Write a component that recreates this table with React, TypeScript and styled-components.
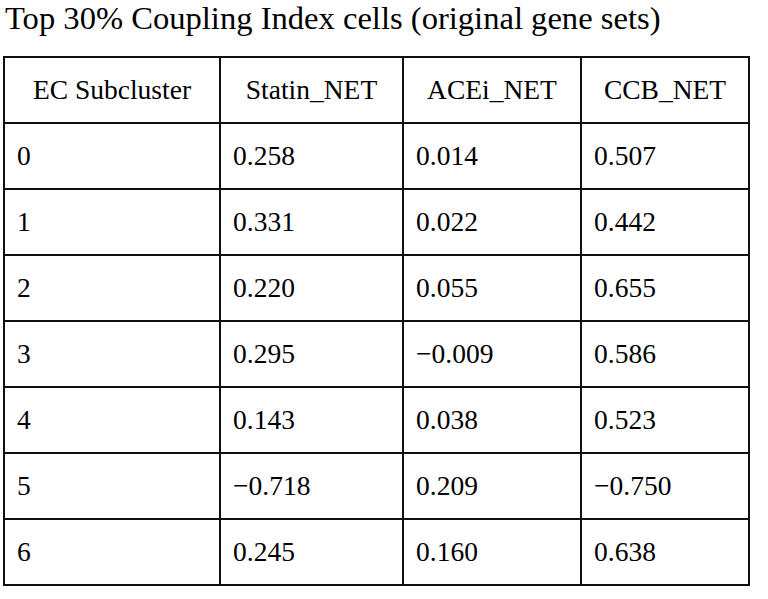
import React from "react";
import styled, { createGlobalStyle } from "styled-components";

const Global = createGlobalStyle`
  html, body {
    margin: 0;
    padding: 0;
    background: #ffffff;
  }
  body {
    font-family: "Liberation Serif", "Times New Roman", serif;
    color: #000;
  }
`;

const Page = styled.div`
  padding: 0 0 0 3px;
`;

const Title = styled.h1`
  margin: 0 0 19px 2px;
  font-size: 32.6px;
  font-weight: 400;
  line-height: 37px;
  white-space: nowrap;
`;

const Table = styled.table`
  border-collapse: collapse;
  border: 2px solid #111;
  font-size: 27.5px;
  table-layout: fixed;
  width: 745px;
`;

const Col = styled.col<{ $w: number }>`
  width: ${(p) => p.$w}px;
`;

const HeadCell = styled.th`
  border: 2px solid #111;
  font-weight: 400;
  text-align: center;
  height: 64px;
  padding: 0 10px;
  vertical-align: middle;
`;

const Cell = styled.td`
  border: 2px solid #111;
  text-align: left;
  height: 64px;
  padding: 0 12px;
  vertical-align: middle;
`;

const headers = ["EC Subcluster", "Statin_NET", "ACEi_NET", "CCB_NET"];
const rows: [string, string, string, string][] = [
  ["0", "0.258", "0.014", "0.507"],
  ["1", "0.331", "0.022", "0.442"],
  ["2", "0.220", "0.055", "0.655"],
  ["3", "0.295", "\u22120.009", "0.586"],
  ["4", "0.143", "0.038", "0.523"],
  ["5", "\u22120.718", "0.209", "\u22120.750"],
  ["6", "0.245", "0.160", "0.638"],
];

export default function App() {
  return (
    <Page>
      <Global />
      <Title>Top 30% Coupling Index cells (original gene sets)</Title>
      <Table>
        <colgroup>
          <Col $w={216} />
          <Col $w={183} />
          <Col $w={178} />
          <Col $w={168} />
        </colgroup>
        <thead>
          <tr>
            {headers.map((h) => (
              <HeadCell key={h}>{h}</HeadCell>
            ))}
          </tr>
        </thead>
        <tbody>
          {rows.map((r) => (
            <tr key={r[0]}>
              {r.map((v, i) => (
                <Cell key={i}>{v}</Cell>
              ))}
            </tr>
          ))}
        </tbody>
      </Table>
    </Page>
  );
}
